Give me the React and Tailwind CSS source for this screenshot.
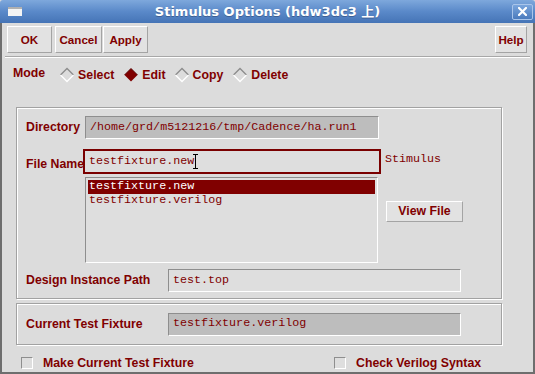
import React from 'react';

const label = "font-['Liberation_Sans',Arial,sans-serif] font-bold text-[12.3px] text-[#800000] leading-none whitespace-nowrap";
const mono = "font-['Liberation_Mono','Courier_New',monospace] text-[11.7px] text-[#800000] leading-none whitespace-nowrap";
const sunken = "border border-t-[#8e8e8e] border-l-[#8e8e8e] border-b-white border-r-white";
const etched = "border border-[#a2a2a2] shadow-[inset_1px_1px_0_#ffffff,1px_1px_0_#ffffff]";

const ToolButton = ({ children, className = '' }) => (
  <button
    className={`h-[27px] flex items-center justify-center bg-[#e2e2e2] border border-t-white border-l-white border-b-[#a4a4a4] border-r-[#a4a4a4] font-['Liberation_Sans',Arial,sans-serif] font-bold text-[11.6px] text-[#800000] ${className}`}
  >
    {children}
  </button>
);

const Diamond = ({ on }) => (
  <svg width="16" height="16" viewBox="0 0 16 16" className="shrink-0">
    {on ? (
      <>
        <polygon points="8,1.5 14.5,8 8,14.5 1.5,8" fill="#800000" />
        <polyline points="1.5,8 8,1.5 14.5,8" fill="none" stroke="#5a0000" strokeWidth="1" />
      </>
    ) : (
      <>
        <polyline points="1.5,8 8,1.5 14.5,8" fill="none" stroke="#8c8c8c" strokeWidth="1.3" />
        <polyline points="1.5,8 8,14.5 14.5,8" fill="none" stroke="#ffffff" strokeWidth="1.3" />
      </>
    )}
  </svg>
);

const Option = ({ on, text, className }) => (
  <div className={`flex items-center ${className}`}>
    <Diamond on={on} />
    <span className={`${label} ml-[3px]`}>{text}</span>
  </div>
);

const Checkbox = () => (
  <div className={`w-[12px] h-[12px] ${sunken} bg-[#dedede] shrink-0`} />
);

export default function App() {
  return (
    <div className="w-[535px] h-[374px] flex flex-col bg-[#dcdcdc] overflow-hidden">
      {/* title bar */}
      <div className="h-[23px] shrink-0 grid grid-cols-[1fr_auto_1fr] items-center bg-linear-to-b from-[#7ea8dc] via-[#5a89c9] to-[#4574b6] rounded-t-[3px]">
        <div className="pl-[8px] flex items-center">
          <div className="w-[14px] h-[9px] bg-[#f4f4f4] border-t-2 border-[#b0b0b0]" />
        </div>
        <div className="font-['DejaVu_Sans','Noto_Sans_CJK_JP',sans-serif] font-bold text-[13px] text-white leading-none [text-shadow:0_1px_0_#3d5f94]">
          Stimulus Options (hdw3dc3 上)
        </div>
        <div className="flex justify-end pr-[2px]">
          <div className="w-[21px] h-[16px] rounded-[2px] border border-[#a9c5ea] bg-linear-to-b from-[#7aa5dc] to-[#4b7bbd] flex items-center justify-center">
            <svg width="9" height="9" viewBox="0 0 9 9">
              <path d="M1 1 L8 8 M8 1 L1 8" stroke="#ffffff" strokeWidth="2.2" strokeLinecap="square" />
            </svg>
          </div>
        </div>
      </div>

      {/* body */}
      <div className="flex-1 flex flex-col border-x-2 border-b-2 border-[#6e6e6e] overflow-hidden">
        {/* toolbar */}
        <div className="h-[33px] shrink-0 flex items-start pt-[3px] pl-[5px] pr-[6px]">
          <ToolButton className="w-[45px]">OK</ToolButton>
          <ToolButton className="w-[47px] ml-[3px]">Cancel</ToolButton>
          <ToolButton className="w-[45px] ml-[1px]">Apply</ToolButton>
          <div className="flex-1" />
          <ToolButton className="w-[32px]">Help</ToolButton>
        </div>
        <div className="mx-[3px] h-[2px] shrink-0 border-t border-[#a8a8a8] border-b border-b-white" />

        {/* mode row */}
        <div className="mt-[5px] h-[24px] shrink-0 flex items-center pl-[11px]">
          <span className={`${label} -mt-[3px]`}>Mode</span>
          <Option className="ml-[14px]" text="Select" />
          <Option className="ml-[9px]" on text="Edit" />
          <Option className="ml-[8px]" text="Copy" />
          <Option className="ml-[9px]" text="Delete" />
        </div>

        {/* main group */}
        <div className={`mt-[20px] ml-[14px] w-[486px] h-[192px] shrink-0 ${etched} flex flex-col`}>
          <div className="mt-[8px] h-[23px] flex items-center pl-[9px]">
            <span className={`${label} w-[59px]`}>Directory</span>
            <div className={`w-[294px] h-[23px] ${sunken} bg-[#bdbdbd] flex items-center pl-[4px]`}>
              <span className={mono}>/home/grd/m5121216/tmp/Cadence/ha.run1</span>
            </div>
          </div>

          <div className="mt-[10px] h-[25px] flex items-center pl-[9px]">
            <span className={`${label} w-[57px] shrink-0 self-end pb-[4px]`}>File Name</span>
            <div className="w-[298px] h-[25px] border-2 border-[#7a0000] bg-[#dedede] flex items-center pl-[4px]">
              <span className={mono}>testfixture.new</span>
              <span className="relative w-[5px] h-[15px] -ml-[1px]">
                <span className="absolute left-[2px] top-0 w-[1px] h-[15px] bg-black" />
                <span className="absolute left-0 top-0 w-[5px] h-[1px] bg-black" />
                <span className="absolute left-0 bottom-0 w-[5px] h-[1px] bg-black" />
              </span>
            </div>
            <span className={`${mono} ml-[4px] -mt-[3px]`}>Stimulus</span>
          </div>

          <div className="mt-[3px] flex items-start">
            <div className={`ml-[68px] w-[293px] h-[86px] ${sunken} bg-[#dedede] p-[2px] flex flex-col`}>
              <div className="h-[14px] bg-[#800000] flex items-center pl-[1px]">
                <span className={`${mono} text-white`}>testfixture.new</span>
              </div>
              <div className="h-[14px] flex items-center pl-[1px]">
                <span className={mono}>testfixture.verilog</span>
              </div>
            </div>
            <button
              className={`ml-[8px] mt-[24px] w-[77px] h-[21px] flex items-center justify-center bg-[#e2e2e2] border border-t-white border-l-white border-b-[#a4a4a4] border-r-[#a4a4a4] ${label}`}
            >
              View File
            </button>
          </div>

          <div className="mt-[6px] h-[23px] flex items-center pl-[9px]">
            <span className={`${label} w-[142px]`}>Design Instance Path</span>
            <div className={`w-[293px] h-[23px] ${sunken} bg-[#dedede] flex items-center pl-[4px]`}>
              <span className={mono}>test.top</span>
            </div>
          </div>
        </div>

        {/* current fixture group */}
        <div className={`mt-[4px] ml-[14px] w-[486px] h-[42px] shrink-0 ${etched} flex items-center pl-[9px]`}>
          <span className={`${label} w-[142px]`}>Current Test Fixture</span>
          <div className={`w-[293px] h-[23px] ${sunken} bg-[#bdbdbd] flex items-center pl-[4px]`}>
            <span className={mono}>testfixture.verilog</span>
          </div>
        </div>

        {/* checkboxes */}
        <div className="mt-[12px] h-[12px] shrink-0 flex items-center pl-[19px]">
          <div className="w-[313px] flex items-center">
            <Checkbox />
            <span className={`${label} ml-[10px]`}>Make Current Test Fixture</span>
          </div>
          <Checkbox />
          <span className={`${label} ml-[10px]`}>Check Verilog Syntax</span>
        </div>
      </div>
    </div>
  );
}
